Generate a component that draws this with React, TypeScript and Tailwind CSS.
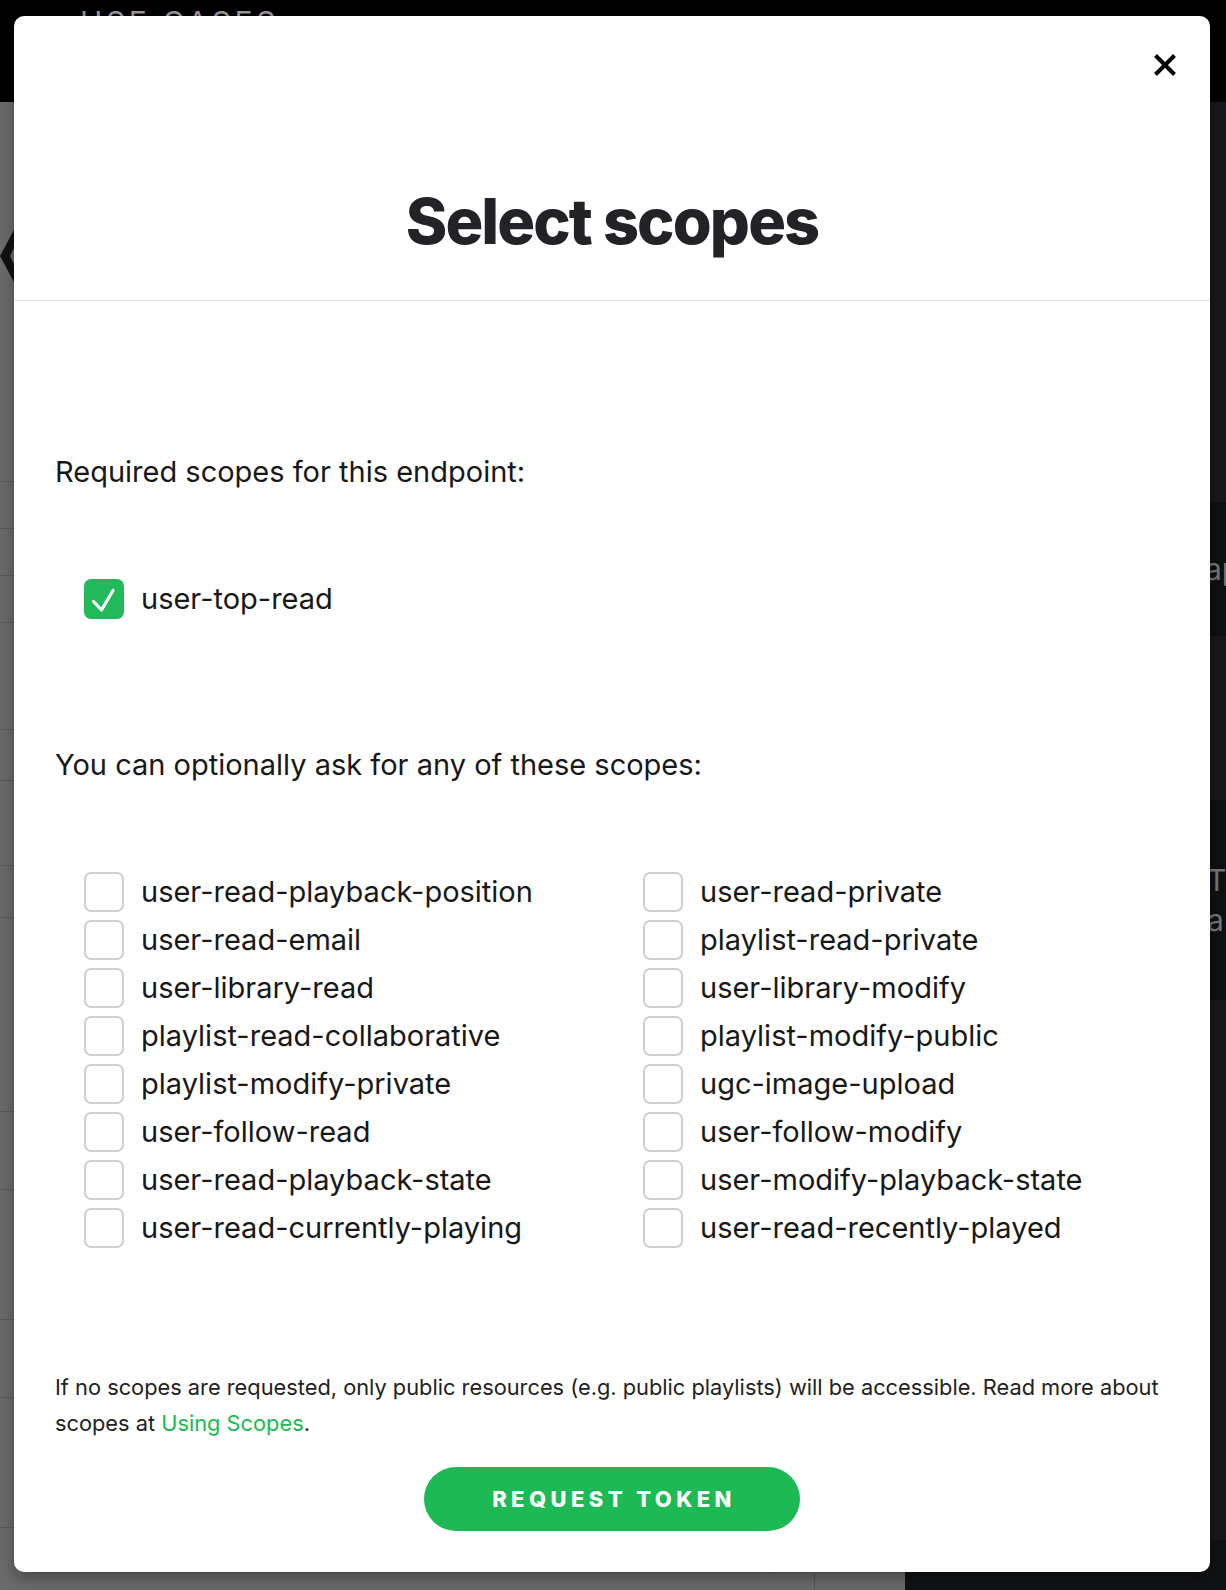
import React from 'react';

const leftScopes = [
  'user-read-playback-position',
  'user-read-email',
  'user-library-read',
  'playlist-read-collaborative',
  'playlist-modify-private',
  'user-follow-read',
  'user-read-playback-state',
  'user-read-currently-playing',
];

const rightScopes = [
  'user-read-private',
  'playlist-read-private',
  'user-library-modify',
  'playlist-modify-public',
  'ugc-image-upload',
  'user-follow-modify',
  'user-modify-playback-state',
  'user-read-recently-played',
];

const CheckBox: React.FC<{ checked?: boolean }> = ({ checked = false }) =>
  checked ? (
    <span className="w-[40px] h-[40px] rounded-[7px] bg-[#21b95a] flex items-center justify-center shrink-0">
      <svg width="40" height="40" viewBox="0 0 40 40" fill="none">
        <path d="M9.5 22.5 L17.5 31 L29 11.5" stroke="#fff" strokeWidth="3.2" strokeLinecap="round" strokeLinejoin="round" />
      </svg>
    </span>
  ) : (
    <span className="w-[40px] h-[40px] rounded-[7px] border-2 border-[#cfcfcf] bg-white shrink-0" />
  );

const ScopeRow: React.FC<{ name: string; checked?: boolean }> = ({ name, checked }) => (
  <label className="flex items-center gap-[17px] h-[40px] cursor-pointer">
    <CheckBox checked={checked} />
    <span className="text-[29px] leading-[40px] text-[#181818] whitespace-nowrap">{name}</span>
  </label>
);

export default function App() {
  return (
    <div className="relative w-[1226px] h-[1590px] overflow-hidden bg-[#6c6c6c]" style={{ fontFamily: 'Inter, "Noto Sans", sans-serif' }}>
      {/* page behind the overlay */}
      <div className="flex flex-col h-full">
        <div className="h-[102px] bg-black shrink-0">
          <div className="pl-[80px] pt-[7px] text-[30px] leading-none tracking-[0.12em] text-[#9a9a9a]">USE CASES</div>
        </div>
        <div className="flex flex-1">
          <div className="flex-1 flex flex-col bg-[#6b6b6b]">
            <div className="h-[140px] pt-[128px]">
              <svg width="14" height="52" viewBox="0 0 14 52">
                <path d="M14 0 L0 26 L14 52 L14 34 L10 26 L14 18 Z" fill="#111" />
              </svg>
            </div>
            <div className="h-[240px] border-b border-[#5c5c5c]" />
            <div className="h-[47px] border-b border-[#5c5c5c]" />
            <div className="h-[47px] border-b border-[#5c5c5c]" />
            <div className="h-[47px] border-b border-[#5c5c5c]" />
            <div className="h-[107px] border-b border-[#5c5c5c]" />
            <div className="h-[51px] border-b border-[#5c5c5c]" />
            <div className="h-[85px] border-b border-[#5c5c5c]" />
            <div className="h-[52px] border-b border-[#5c5c5c]" />
            <div className="h-[194px] border-b border-[#5c5c5c]" />
            <div className="h-[78px] border-b border-[#5c5c5c]" />
            <div className="h-[130px] border-b border-[#5c5c5c]" />
            <div className="h-[78px] border-b border-[#5c5c5c]" />
            <div className="h-[130px] border-b border-[#5c5c5c]" />
            <div className="flex-1 flex">
              <div className="w-[815px] border-r border-[#5a5a5a] flex justify-end pr-[30px] pt-[20px]">
                <div className="w-[26px] h-[26px] rounded-full border border-[#5e5e5e] flex items-center justify-center text-[#111] text-[12px]">⌄</div>
              </div>
            </div>
          </div>
          <div className="w-[321px] flex flex-col bg-[#111214] text-[#777] text-[30px]">
            <div className="h-[400px] bg-[#18181b]" />
            <div className="h-[134px] flex items-center pl-[300px] bg-[#0f1012]">ap</div>
            <div className="h-[164px] bg-[#18181b]" />
            <div className="h-[200px] flex flex-col justify-center pl-[302px] leading-[40px] bg-[#0f1012]">
              <span>Th</span>
              <span>a</span>
            </div>
            <div className="flex-1 bg-[#18181b]" />
            <div className="h-[50px] bg-[#111214]" />
          </div>
        </div>
      </div>

      {/* modal */}
      <div className="absolute left-[14px] top-[16px] w-[1196px] h-[1556px] bg-white rounded-[10px] shadow-[0_6px_16px_rgba(0,0,0,0.35)] flex flex-col">
        <div className="relative h-[285px] shrink-0 border-b border-[#e3e3e3] flex items-center justify-center pt-[126px]">
          <h1 className="text-[63px] font-extrabold tracking-[-0.03em] text-[#222326] leading-none">Select scopes</h1>
          <button className="absolute right-[33px] top-[37px] w-[24px] h-[24px]">
            <svg width="24" height="24" viewBox="0 0 24 24">
              <path d="M2.5 2.5 L21.5 21.5 M21.5 2.5 L2.5 21.5" stroke="#000" strokeWidth="4" />
            </svg>
          </button>
        </div>

        <div className="flex flex-col px-[41px]">
          <p className="mt-[151px] text-[29px] leading-[40px] text-[#181818]">Required scopes for this endpoint:</p>
          <div className="mt-[87px] pl-[29px]">
            <ScopeRow name="user-top-read" checked />
          </div>

          <p className="mt-[126px] text-[29px] leading-[40px] text-[#181818]">You can optionally ask for any of these scopes:</p>
          <div className="mt-[87px] pl-[29px] grid grid-cols-[559px_1fr]">
            <div className="flex flex-col gap-[8px]">
              {leftScopes.map((s) => (
                <ScopeRow key={s} name={s} />
              ))}
            </div>
            <div className="flex flex-col gap-[8px]">
              {rightScopes.map((s) => (
                <ScopeRow key={s} name={s} />
              ))}
            </div>
          </div>

          <p className="mt-[121px] text-[21.8px] leading-[36px] text-[#222]">
            If no scopes are requested, only public resources (e.g. public playlists) will be accessible. Read more about scopes at{' '}
            <a className="text-[#1db954]">Using Scopes</a>.
          </p>

          <div className="mt-[26px] flex justify-center">
            <button className="w-[376px] h-[64px] rounded-full bg-[#1db954] text-white text-[22px] font-extrabold tracking-[0.2em] pl-[4px]">
              REQUEST TOKEN
            </button>
          </div>
        </div>
      </div>
    </div>
  );
}
